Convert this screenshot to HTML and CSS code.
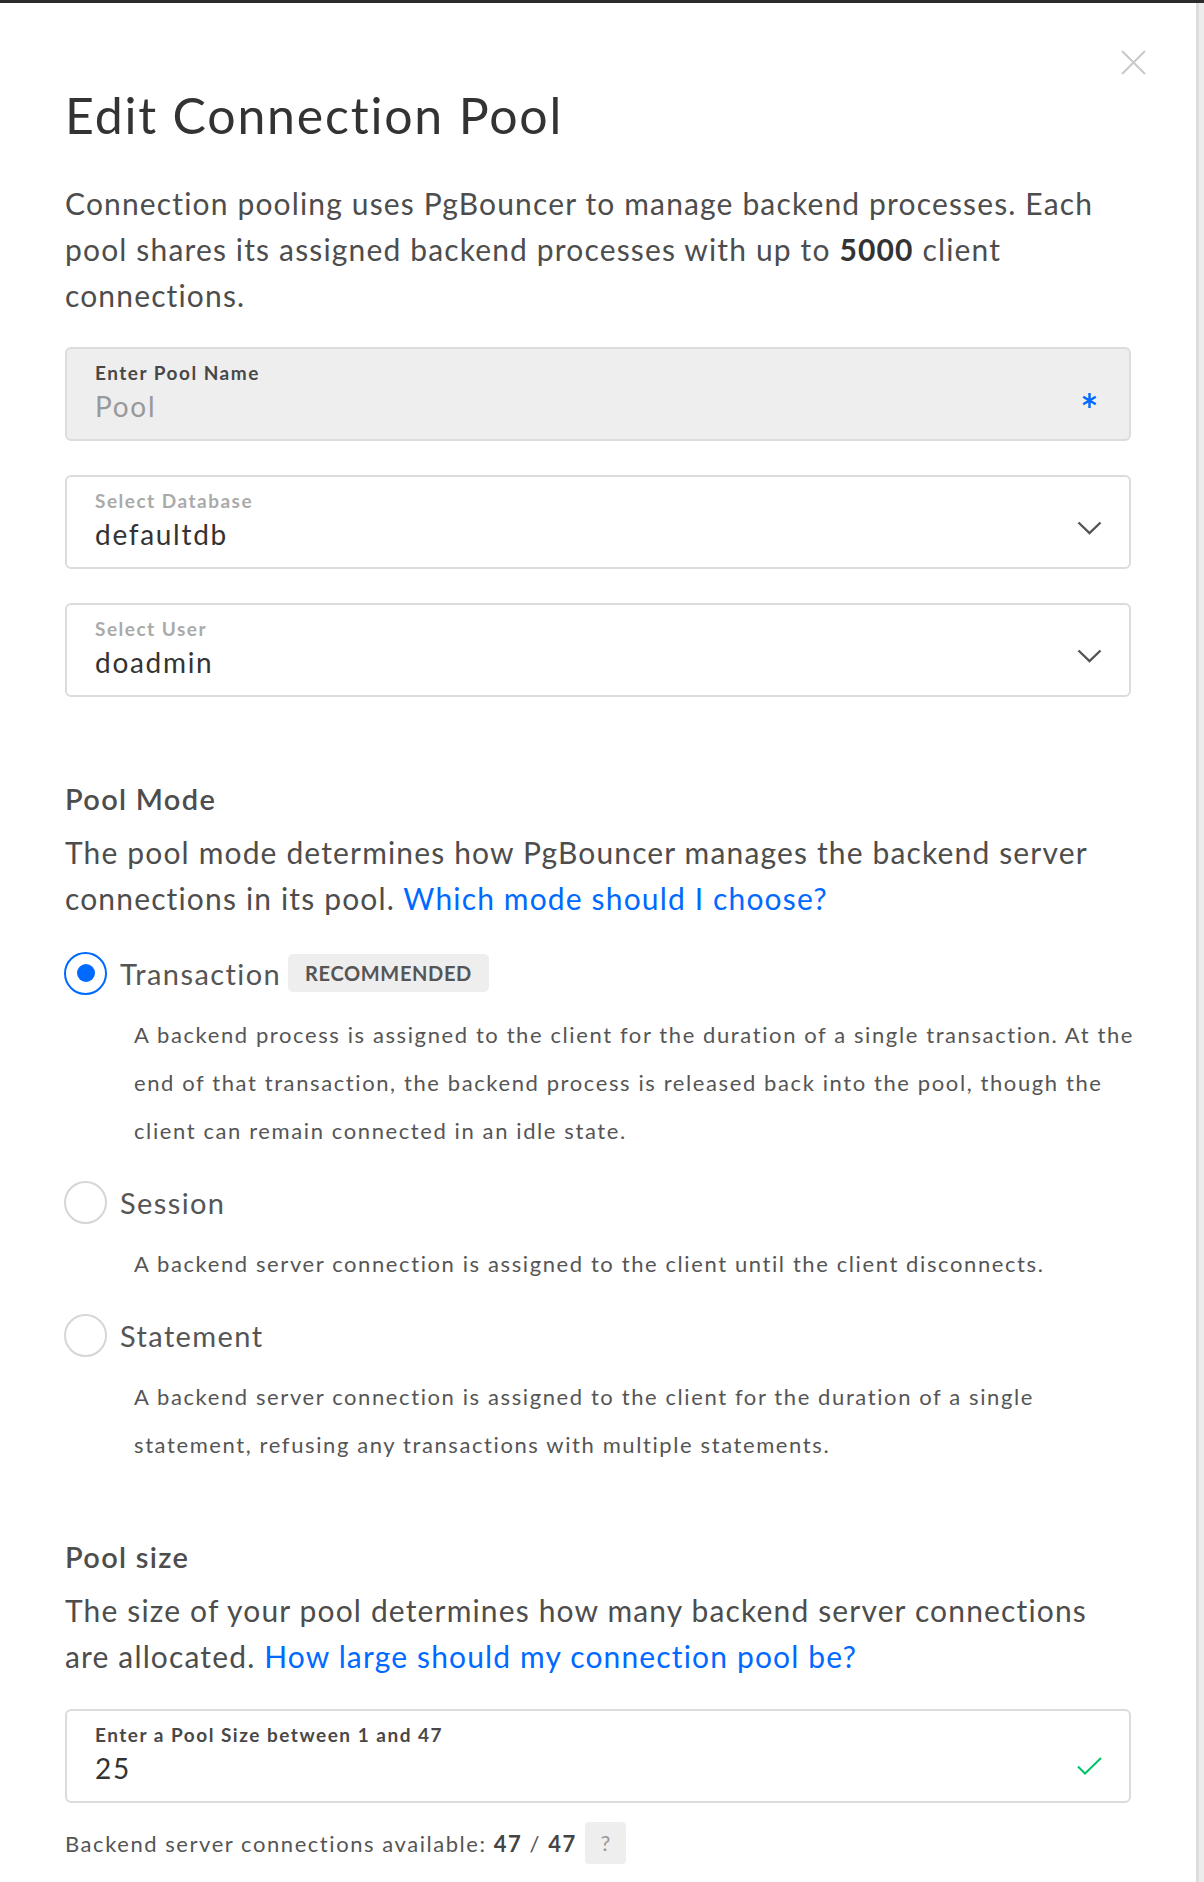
FILE: index.html
```html
<!DOCTYPE html>
<html lang="en">
<head>
    <meta charset="UTF-8">
    <meta name="viewport" content="width=device-width, initial-scale=1.0">
    <title>Edit Connection Pool</title>
    <link rel="stylesheet" href="styles.css">
</head>
<body>
    <div class="topbar"></div>
    <div class="page">
        <div class="modal">
            <button class="close" type="button" aria-label="Close">
                <svg width="25" height="25" viewBox="0 0 25 25"><path d="M1 1L24 24M24 1L1 24" stroke="#c9c9c9" stroke-width="2" fill="none"/></svg>
            </button>

            <h1>Edit Connection Pool</h1>
            <p class="lead">Connection pooling uses PgBouncer to manage backend processes. Each pool shares its assigned backend processes with up to <strong>5000</strong> client connections.</p>

            <div class="field field-locked">
                <div class="field-text">
                    <label>Enter Pool Name</label>
                    <div class="field-value placeholder">Pool</div>
                </div>
                <svg class="asterisk" width="15" height="17" viewBox="0 0 15 17"><path d="M7.5 1V16M1.2 4.8L13.8 12.2M13.8 4.8L1.2 12.2" stroke="#0069ff" stroke-width="2.4" fill="none"/></svg>
            </div>

            <div class="field">
                <div class="field-text">
                    <label class="muted">Select Database</label>
                    <div class="field-value">defaultdb</div>
                </div>
                <svg class="chevron" width="25" height="14" viewBox="0 0 25 14"><path d="M1.5 1.5L12.5 12L23.5 1.5" stroke="#555" stroke-width="2.4" fill="none"/></svg>
            </div>

            <div class="field">
                <div class="field-text">
                    <label class="muted">Select User</label>
                    <div class="field-value">doadmin</div>
                </div>
                <svg class="chevron" width="25" height="14" viewBox="0 0 25 14"><path d="M1.5 1.5L12.5 12L23.5 1.5" stroke="#555" stroke-width="2.4" fill="none"/></svg>
            </div>

            <section class="mode">
                <h2>Pool Mode</h2>
                <p class="text">The pool mode determines how PgBouncer manages the backend server connections in its pool. <a href="#">Which mode should I choose?</a></p>

                <div class="options">
                    <div class="option">
                        <div class="option-head">
                            <span class="radio checked"></span>
                            <span class="option-name">Transaction</span>
                            <span class="badge">RECOMMENDED</span>
                        </div>
                        <p class="option-desc">A backend process is assigned to the client for the duration of a single transaction. At the end of that transaction, the backend process is released back into the pool, though the client can remain connected in an idle state.</p>
                    </div>
                    <div class="option">
                        <div class="option-head">
                            <span class="radio"></span>
                            <span class="option-name">Session</span>
                        </div>
                        <p class="option-desc">A backend server connection is assigned to the client until the client disconnects.</p>
                    </div>
                    <div class="option">
                        <div class="option-head">
                            <span class="radio"></span>
                            <span class="option-name">Statement</span>
                        </div>
                        <p class="option-desc">A backend server connection is assigned to the client for the duration of a single statement, refusing any transactions with multiple statements.</p>
                    </div>
                </div>
            </section>

            <section class="size">
                <h2>Pool size</h2>
                <p class="text">The size of your pool determines how many backend server connections are allocated. <a href="#">How large should my connection pool be?</a></p>

                <div class="field">
                    <div class="field-text">
                        <label>Enter a Pool Size between 1 and 47</label>
                        <div class="field-value">25</div>
                    </div>
                    <svg class="check" width="25" height="18" viewBox="0 0 25 18"><path d="M1 9.5L8 16.5L24 1" stroke="#00c26b" stroke-width="2" fill="none"/></svg>
                </div>

                <div class="available">
                    <span>Backend server connections available: <b>47</b> / <b>47</b></span>
                    <span class="help">?</span>
                </div>
            </section>
        </div>
        <div class="side"></div>
    </div>
</body>
</html>
```

FILE: styles.css
```css
body {
    margin: 0;
    padding: 0;
    font-family: "Lato", "Open Sans", sans-serif;
    letter-spacing: 1px;
    color: #4d4d4d;
    background: #fff;
    overflow: hidden;
}
.topbar {
    height: 3px;
    background: #2b2b2b;
}
.page {
    display: flex;
    min-height: 1879px;
}
.modal {
    position: relative;
    width: 1196px;
    padding: 82px 65px 0;
    box-sizing: border-box;
}
.side {
    flex: 1;
    background: #ececec;
    border-left: 3px solid #dcdcdc;
}
.close {
    position: absolute;
    top: 47px;
    right: 50px;
    padding: 0;
    border: none;
    background: none;
    line-height: 0;
    cursor: pointer;
}

h1 {
    margin: 0;
    font-size: 50px;
    line-height: 60px;
    font-weight: 400;
    letter-spacing: 1.8px;
    color: #333;
}
.lead, .text {
    margin: 0;
    font-size: 30px;
    line-height: 46px;
    letter-spacing: 1.15px;
    color: #4d4d4d;
}
.lead { margin-top: 35px; }
.lead strong { font-weight: 700; color: #333; }
.text a { color: #0069ff; text-decoration: none; }

/* form fields */
.field {
    display: flex;
    align-items: flex-start;
    height: 94px;
    margin-top: 34px;
    padding: 13px 27px 0 28px;
    box-sizing: border-box;
    border: 2px solid #dcdcdc;
    border-radius: 6px;
}
.lead + .field { margin-top: 29px; }
.field-locked { background: #eee; }
.field-text { flex: 1; }
.field label {
    display: block;
    font-size: 19px;
    line-height: 22px;
    font-weight: 700;
    letter-spacing: 1.5px;
    color: #484848;
}
.field label.muted { color: #aaa; }
.field-value {
    margin-top: 5px;
    font-size: 28px;
    line-height: 34px;
    letter-spacing: 1.7px;
    color: #333;
}
.field-value.placeholder { color: #999; }
.asterisk { margin: 30px 5px 0 0; }
.chevron { margin-top: 31px; }
.check { margin-top: 33px; }

/* sections */
h2 {
    margin: 0;
    font-size: 29px;
    line-height: 36px;
    font-weight: 600;
    letter-spacing: 1.3px;
    color: #4d4d4d;
}
h2 + .text { margin-top: 12px; }
.mode { margin-top: 84px; }
.size { margin-top: 70px; }
.size .field { margin-top: 30px; }

.options {
    display: flex;
    flex-direction: column;
    gap: 25px;
    margin-top: 30px;
}
.option-head {
    display: flex;
    align-items: center;
    height: 44px;
}
.radio {
    width: 43px;
    height: 43px;
    box-sizing: border-box;
    border: 2px solid #d6d6d6;
    border-radius: 50%;
    display: flex;
    align-items: center;
    justify-content: center;
    margin-left: -1px;
}
.radio.checked { border-color: #0069ff; }
.radio.checked::after {
    content: "";
    width: 18px;
    height: 18px;
    border-radius: 50%;
    background: #0069ff;
}
.option-name {
    margin-left: 13px;
    font-size: 29px;
    letter-spacing: 1.4px;
    color: #555;
}
.badge {
    margin-left: 7px;
    height: 38px;
    line-height: 38px;
    padding: 0 17px;
    border-radius: 5px;
    background: #eee;
    font-size: 20px;
    font-weight: 700;
    letter-spacing: 0.65px;
    color: #555;
}
.option-desc {
    margin: 16px -6px 0 0;
    padding-left: 69px;
    font-size: 22px;
    line-height: 48px;
    letter-spacing: 1.6px;
    color: #555;
}

.available {
    display: flex;
    align-items: center;
    margin-top: 19px;
    font-size: 22px;
    letter-spacing: 1.55px;
    color: #555;
}
.available b { font-weight: 700; color: #444; }
.help {
    margin-left: 8px;
    width: 41px;
    height: 42px;
    line-height: 42px;
    text-align: center;
    border-radius: 4px;
    background: #eee;
    color: #999;
    letter-spacing: 0;
}
```
